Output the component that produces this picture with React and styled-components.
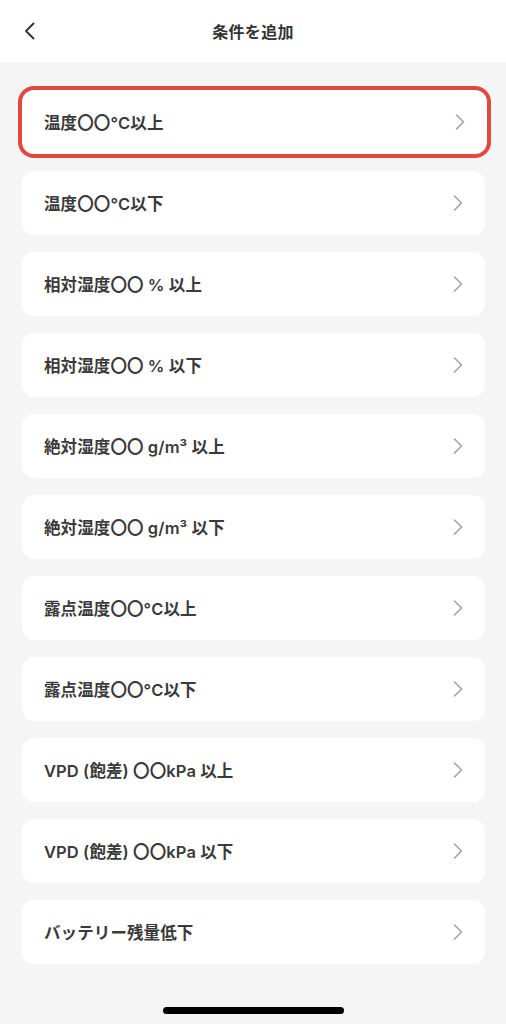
import React from "react";
import styled, { createGlobalStyle } from "styled-components";

const Global = createGlobalStyle`
  html, body { margin: 0; padding: 0; background: #f5f5f5; }
  body { font-family: Inter, "Noto Sans CJK JP", "Noto Sans", sans-serif; }
  * { box-sizing: border-box; }
`;

const Page = styled.div`
  width: 506px;
  height: 1024px;
  background: #f5f5f5;
  display: flex;
  flex-direction: column;
  position: relative;
  overflow: hidden;
`;

const Header = styled.header`
  height: 62px;
  background: #ffffff;
  display: grid;
  grid-template-columns: 60px 1fr 60px;
  align-items: center;
`;

const BackButton = styled.button`
  border: none;
  background: none;
  padding: 0 0 0 23px;
  height: 100%;
  display: flex;
  align-items: center;
  cursor: pointer;
`;

const Title = styled.h1`
  margin: 0;
  text-align: center;
  font-size: 16px;
  font-weight: 700;
  color: #333333;
  letter-spacing: 0.3px;
`;

const List = styled.div`
  display: flex;
  flex-direction: column;
  gap: 17px;
  padding: 28px 21px 0 22px;
`;

const Card = styled.div`
  height: 64px;
  background: #ffffff;
  border-radius: 12px;
  display: flex;
  align-items: center;
  justify-content: space-between;
  padding: 0 21px 0 22px;
  box-shadow: ${(p) => (p.$selected ? "0 0 0 4px #e2493e" : "none")};
  margin-right: ${(p) => (p.$selected ? "-2px" : "0")};
`;

const Label = styled.span`
  font-size: 16.5px;
  font-weight: 600;
  color: #3a3a3a;
  letter-spacing: 0.1px;
`;

const HomeBar = styled.div`
  position: absolute;
  left: 163px;
  bottom: 10px;
  width: 181px;
  height: 7px;
  border-radius: 4px;
  background: #000;
`;

const Chevron = () => (
  <svg width="12" height="20" viewBox="0 0 12 20" fill="none">
    <path d="M2.5 3l7 7-7 7" stroke="#a3a3a3" strokeWidth="1.6" strokeLinecap="round" strokeLinejoin="round" />
  </svg>
);

const BackIcon = () => (
  <svg width="14" height="20" viewBox="0 0 14 20" fill="none">
    <path d="M10.5 2.5L3 10l7.5 7.5" stroke="#333" strokeWidth="1.9" strokeLinecap="round" strokeLinejoin="round" />
  </svg>
);

const items = [
  "温度〇〇°C以上",
  "温度〇〇°C以下",
  "相対湿度〇〇 % 以上",
  "相対湿度〇〇 % 以下",
  "絶対湿度〇〇 g/m³ 以上",
  "絶対湿度〇〇 g/m³ 以下",
  "露点温度〇〇°C以上",
  "露点温度〇〇°C以下",
  "VPD (飽差) 〇〇kPa 以上",
  "VPD (飽差) 〇〇kPa 以下",
  "バッテリー残量低下",
];

export default function App() {
  return (
    <Page>
      <Global />
      <Header>
        <BackButton aria-label="戻る"><BackIcon /></BackButton>
        <Title>条件を追加</Title>
        <span />
      </Header>
      <List>
        {items.map((t, i) => (
          <Card key={t} $selected={i === 0}>
            <Label>{t}</Label>
            <Chevron />
          </Card>
        ))}
      </List>
      <HomeBar />
    </Page>
  );
}
